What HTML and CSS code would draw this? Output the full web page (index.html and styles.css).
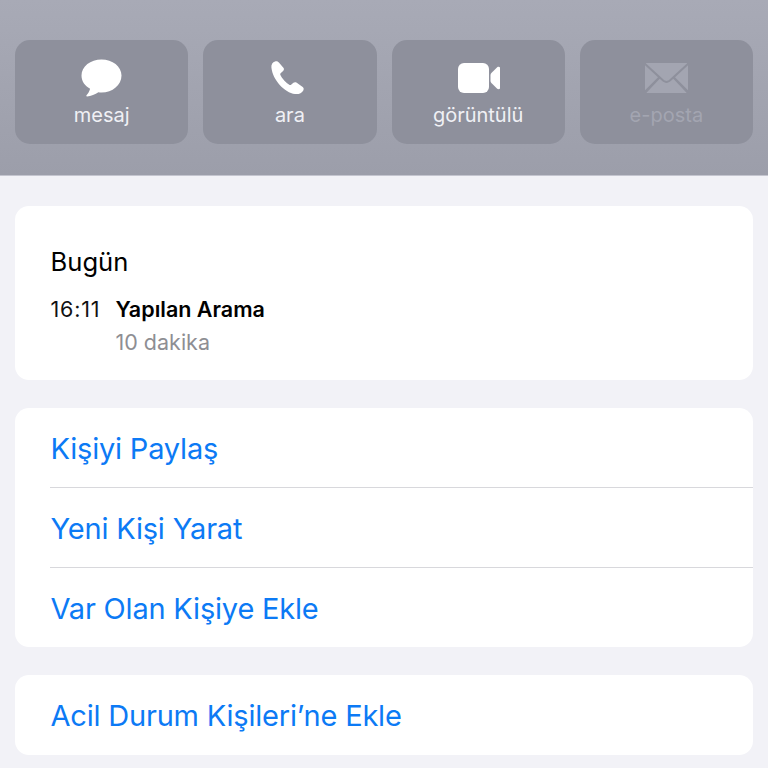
FILE: index.html
```html
<!DOCTYPE html>
<html lang="tr">

<head>
    <meta charset="UTF-8">
    <meta name="viewport" content="width=device-width, initial-scale=1.0">
    <title>Kişi</title>
    <link rel="stylesheet" href="styles.css">
</head>

<body>
    <section class="actions">
        <section class="action">
            <svg class="icon" viewBox="0 0 43 38">
                <path d="M21.500 0.500C10.500 0.500 1.500 7.400 1.500 16.500c0 5.600 3.300 10.400 8.600 13.300-.5 2.500-2.300 5-3.600 6.500-.4 .6-.1 1.200 .6 1.100 3.700-.4 8.300-1.900 11.300-4.200 1 .2 2 .3 3.100 .3 11 0 20-7.500 20-17C41.500 7.400 32.500 .5 21.500 .5z" fill="#fff"/>
            </svg>
            <span>mesaj</span>
        </section>
        <section class="action">
            <svg class="icon" viewBox="0 0 43 38">
                <path d="M7 2.400C4.800 3.100 3 5.200 3.400 8.600c.8 6.700 4 12.700 8.300 17.300 4.400 4.600 10 8.400 15.300 9.100 3.600 .5 6.800-.9 8.300-3.600 .7-1.300 .5-2.500-.6-3.300l-6.300-4.500c-1-.7-2.100-.6-3 .2l-2.300 2c-.5 .4-1 .4-1.500 .1-2-1.200-3.700-2.700-5.400-4.500-1.600-1.800-3-3.600-3.900-5.700-.2-.5-.1-1 .3-1.400l2.500-2.200c.9-.8 1.100-1.900 .5-3L11.100 3.700C10.300 2.400 8.700 1.800 7 2.400z" fill="#fff"/>
            </svg>
            <span>ara</span>
        </section>
        <section class="action">
            <svg class="icon" viewBox="0 0 43 38">
                <rect x="1" y="4" width="31" height="30" rx="6" fill="#fff"/>
                <path d="M33.500 16c0-.8 .3-1.400 .9-2l5.800-5.700c1.300-1 3.300-.3 3.300 1.300v18.800c0 1.600-2 2.300-3.300 1.300l-5.800-5.700c-.6-.6-.9-1.200-.9-2z" fill="#fff"/>
            </svg>
            <span>görüntülü</span>
        </section>
        <section class="action disabled">
            <svg class="icon" viewBox="0 0 43 38">
                <path d="M2 4h39c.5 0 .9 .1 1.200 .3L24.500 20.500c-1 1-2 1.400-3 1.400s-2-.4-3-1.400L.8 4.300C1.100 4.100 1.500 4 2 4z" fill="#a3a5b1"/>
                <path d="M0 6.200 13 18.200 0 31.200zM43 6.200 30 18.200 43 31.200zM14.700 19.800l2.500 2.300c1.300 1.200 2.700 1.800 4.300 1.800s3-.6 4.300-1.800l2.500-2.300L41.500 33.800c-.2 .1-.4 .2-.7 .2H2.200c-.3 0-.5-.1-.7-.2z" fill="#a3a5b1"/>
            </svg>
            <span>e-posta</span>
        </section>
    </section>

    <section class="list">
        <section class="card history">
            <span class="history-day">Bugün</span>
            <section class="history-row">
                <span class="history-time">16:11</span>
                <section class="history-info">
                    <span class="history-title">Yapılan Arama</span>
                    <span class="history-length">10 dakika</span>
                </section>
            </section>
        </section>

        <section class="card">
            <section class="card-row">Kişiyi Paylaş</section>
            <section class="card-row">Yeni Kişi Yarat</section>
            <section class="card-row">Var Olan Kişiye Ekle</section>
        </section>

        <section class="card">
            <section class="card-row">Acil Durum Kişileri’ne Ekle</section>
        </section>
    </section>
</body>

</html>
```

FILE: styles.css
```css
* {
    box-sizing: border-box;
}

body {
    margin: 0;
    height: 768px;
    overflow: hidden;
    background-color: #f2f2f7;
    font-family: Inter, "Liberation Sans", sans-serif;
}

.actions {
    height: 176px;
    padding: 40px 15px 0;
    display: grid;
    grid-template-columns: repeat(4, 1fr);
    column-gap: 15px;
    align-content: start;
    background: linear-gradient(#a8aab6, #9c9eaa);
    border-bottom: 1px solid #c4c5cf;
}

.action {
    height: 104px;
    padding-top: 19px;
    display: flex;
    flex-direction: column;
    align-items: center;
    border-radius: 15px;
    background-color: #8e909c;
    color: #f0f0f5;
    font-size: 20px;
    line-height: 24px;
}

.icon {
    width: 43px;
    height: 38px;
    margin-bottom: 6px;
}

.disabled {
    color: #a3a5b1;
}

.list {
    padding: 30px 15px 0;
    display: flex;
    flex-direction: column;
    gap: 28px;
}

.card {
    border-radius: 14px;
    background-color: #fff;
}

.history {
    height: 174px;
    padding: 39px 35.500px 0;
    display: flex;
    flex-direction: column;
}

.history-day {
    font-size: 25.600px;
    line-height: 34px;
    color: #000;
}

.history-row {
    margin-top: 17px;
    display: flex;
    gap: 14px;
}

.history-time {
    width: 51px;
    font-size: 21.500px;
    line-height: 26px;
    letter-spacing: 0.8px;
    color: #111;
}

.history-info {
    display: flex;
    flex-direction: column;
    gap: 7px;
}

.history-title {
    font-size: 21.500px;
    line-height: 26px;
    font-weight: 600;
    color: #000;
}

.history-length {
    font-size: 21.500px;
    line-height: 26px;
    color: #8e8e93;
}

.card-row {
    height: 80px;
    margin-left: 35px;
    padding: 1px 0 0 0.500px;
    display: flex;
    align-items: center;
    font-size: 29px;
    letter-spacing: -0.2px;
    color: #0c7af5;
    border-bottom: 1px solid #d8d8dc;
}

.card-row:last-child {
    height: 79.400px;
    border-bottom: none;
}
```
